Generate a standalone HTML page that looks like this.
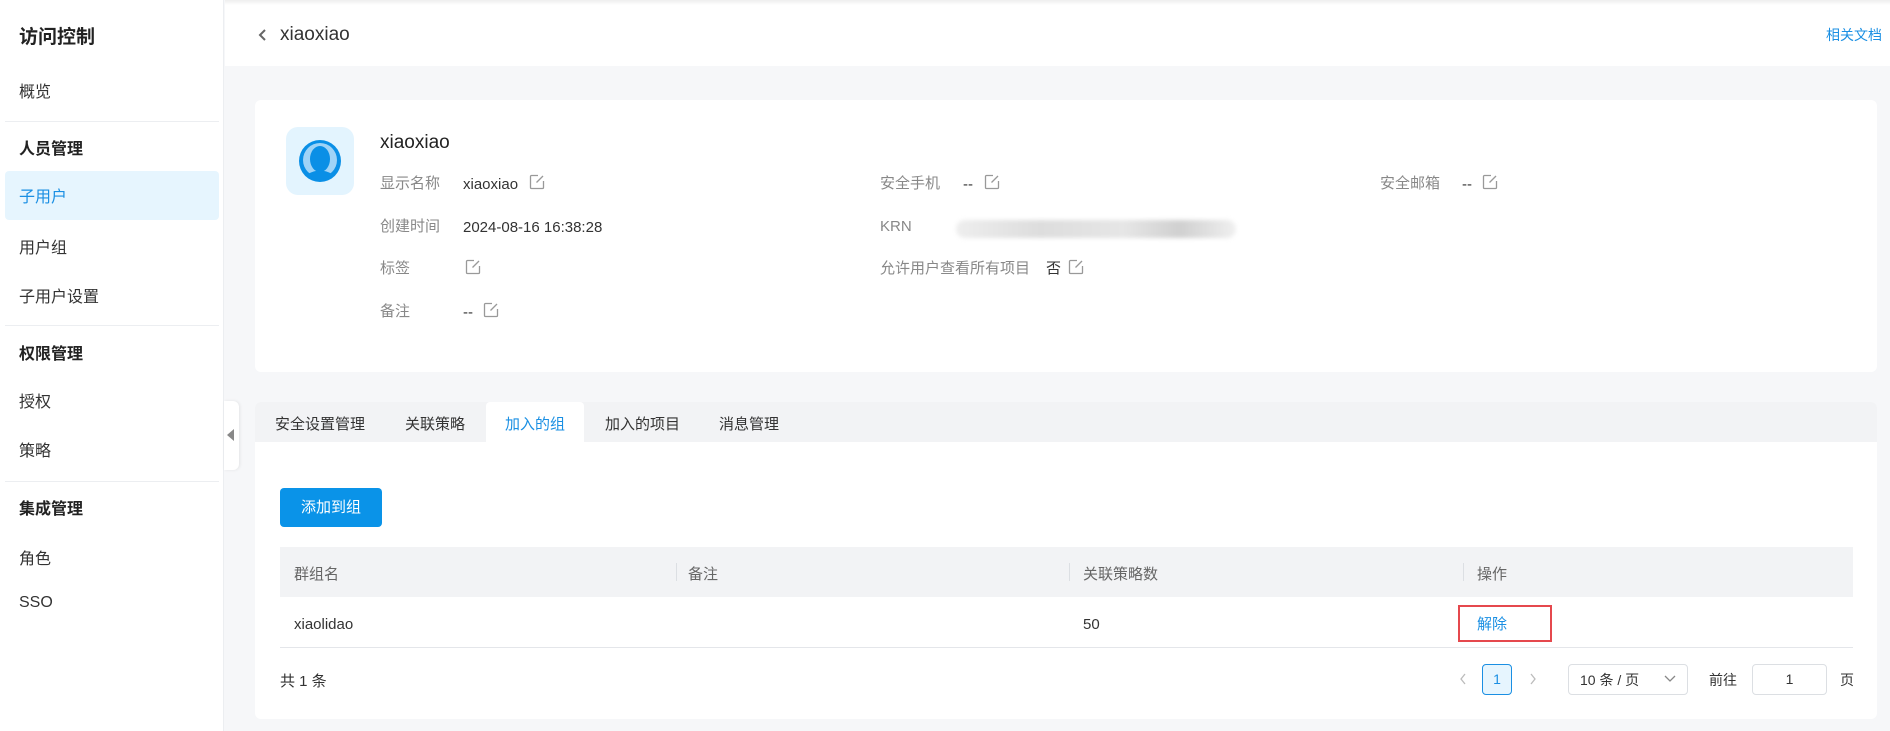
<!DOCTYPE html>
<html><head><meta charset="utf-8"><style>
*{box-sizing:border-box;margin:0;padding:0}
body{width:1890px;height:731px;overflow:hidden;background:#f6f7f9;font-family:"Liberation Sans","Noto Sans CJK SC",sans-serif;color:#333;position:relative}
.abs{position:absolute;white-space:nowrap}
.side{position:absolute;left:0;top:0;width:224px;height:731px;background:#fff;border-right:1px solid #eceef1}
.side .t{position:absolute;left:19px;font-size:16px;color:#333}
.side .h{font-weight:bold;color:#222}
.div{position:absolute;left:5px;width:214px;height:1px;background:#eceef1}
.hdr{position:absolute;left:225px;top:0;width:1665px;height:66px;background:#fff}
.card{position:absolute;background:#fff;border-radius:6px}
.lbl{position:absolute;font-size:15px;color:#888;white-space:nowrap}
.val{position:absolute;font-size:15px;color:#333;white-space:nowrap}
.ed{position:absolute;width:16px;height:16px}
.tab{position:absolute;top:413px;font-size:15px;color:#333}
.th{position:absolute;top:563px;font-size:15px;color:#666}
.sep{position:absolute;top:563px;width:1px;height:18px;background:#dcdfe3}
</style></head><body>
<div class="side">
<div class="t h" style="top:22px;font-size:19px">访问控制</div>
<div class="t" style="top:78px">概览</div>
<div class="div" style="top:121px"></div>
<div class="t h" style="top:135px">人员管理</div>
<div style="position:absolute;left:5px;top:171px;width:214px;height:49px;background:#e6f5fe;border-radius:4px"></div>
<div class="t" style="top:183px;color:#1a8fe3">子用户</div>
<div class="t" style="top:234px">用户组</div>
<div class="t" style="top:283px">子用户设置</div>
<div class="div" style="top:325px"></div>
<div class="t h" style="top:340px">权限管理</div>
<div class="t" style="top:388px">授权</div>
<div class="t" style="top:437px">策略</div>
<div class="div" style="top:481px"></div>
<div class="t h" style="top:495px">集成管理</div>
<div class="t" style="top:545px">角色</div>
<div class="t" style="top:594px">SSO</div>
</div>
<div style="position:absolute;left:224px;top:401px;width:15px;height:69px;background:#fff;border-radius:0 6px 6px 0;box-shadow:1px 0 3px rgba(0,0,0,.08)"></div>
<div style="position:absolute;left:227px;top:429px;width:0;height:0;border-top:6px solid transparent;border-bottom:6px solid transparent;border-right:7px solid #888"></div>
<div class="hdr"></div>
<div class="abs" style="left:225px;top:0;width:1665px;height:5px;background:linear-gradient(#eee,#fff)"></div>
<svg class="abs" style="left:257px;top:28px" width="12" height="14"><path d="M8 2 L3 7 L8 12" stroke="#666" stroke-width="2" fill="none"/></svg>
<div class="abs" style="left:280px;top:24px;font-size:19px;color:#333">xiaoxiao</div>
<div class="abs" style="left:1826px;top:25px;font-size:14px;color:#1a8fe3">相关文档</div>

<div class="card" style="left:255px;top:100px;width:1622px;height:272px"></div>
<div class="abs" style="left:286px;top:127px;width:68px;height:68px;background:#e3f4fe;border-radius:12px"></div>
<svg class="abs" style="left:296px;top:137px" width="48" height="48" viewBox="0 0 48 48"><ellipse cx="24" cy="24" rx="21" ry="21" fill="#0a8fe6"/><ellipse cx="24" cy="23" rx="17" ry="17" fill="#9fd3f7"/><path d="M12 37 Q24 30 36 37 Q30 42 24 42 Q18 42 12 37Z" fill="#0a8fe6"/><ellipse cx="24" cy="22" rx="10" ry="13" fill="#0a8fe6"/></svg>
<div class="abs" style="left:380px;top:132px;font-size:19px;color:#222">xiaoxiao</div>

<div class="lbl" style="left:380px;top:172px">显示名称</div><div class="val" style="left:463px;top:176px">xiaoxiao</div>
<div class="lbl" style="left:380px;top:215px">创建时间</div><div class="val" style="left:463px;top:219px">2024-08-16 16:38:28</div>
<div class="lbl" style="left:380px;top:257px">标签</div>
<div class="lbl" style="left:380px;top:300px">备注</div><div class="val" style="left:463px;top:304px">--</div>
<div class="lbl" style="left:880px;top:172px">安全手机</div><div class="val" style="left:963px;top:176px">--</div>
<div class="lbl" style="left:880px;top:218px">KRN</div>
<div class="abs" style="left:956px;top:220px;width:280px;height:18px;background:linear-gradient(90deg,#eee,#ddd 30%,#e6e6e6 60%,#d0d0d0 80%,#f0f0f0);border-radius:9px;filter:blur(2px)"></div>
<div class="lbl" style="left:880px;top:257px">允许用户查看所有项目</div><div class="val" style="left:1046px;top:257px">否</div>
<div class="lbl" style="left:1380px;top:172px">安全邮箱</div><div class="val" style="left:1462px;top:176px">--</div>
<svg width="0" height="0" style="position:absolute"><defs><symbol id="e" viewBox="0 0 16 16"><path d="M9 1.5H2.5a1 1 0 0 0-1 1v11a1 1 0 0 0 1 1h11a1 1 0 0 0 1-1V7" stroke="#999" stroke-width="1.3" fill="none"/><path d="M7.5 8.5 L14 2" stroke="#999" stroke-width="1.3"/></symbol></defs></svg>
<svg class="ed" style="left:529px;top:174px"><use href="#e"/></svg>
<svg class="ed" style="left:465px;top:259px"><use href="#e"/></svg>
<svg class="ed" style="left:483px;top:302px"><use href="#e"/></svg>
<svg class="ed" style="left:984px;top:174px"><use href="#e"/></svg>
<svg class="ed" style="left:1068px;top:259px"><use href="#e"/></svg>
<svg class="ed" style="left:1482px;top:174px"><use href="#e"/></svg>

<div class="card" style="left:255px;top:402px;width:1622px;height:317px"></div>
<div class="abs" style="left:255px;top:402px;width:1622px;height:40px;background:#f2f3f5;border-radius:6px 6px 0 0"></div>
<div class="abs" style="left:486px;top:402px;width:98px;height:40px;background:#fff;border-radius:4px 4px 0 0"></div>
<div class="tab" style="left:275px">安全设置管理</div>
<div class="tab" style="left:405px">关联策略</div>
<div class="tab" style="left:505px;color:#1a8fe3">加入的组</div>
<div class="tab" style="left:605px">加入的项目</div>
<div class="tab" style="left:719px">消息管理</div>

<div class="abs" style="left:280px;top:488px;width:102px;height:39px;background:#0a93e8;border-radius:4px;color:#fff;font-size:15px;line-height:39px;text-align:center">添加到组</div>
<div class="abs" style="left:280px;top:547px;width:1573px;height:50px;background:#f2f3f5"></div>
<div class="th" style="left:294px">群组名</div>
<div class="sep" style="left:676px"></div><div class="th" style="left:688px">备注</div>
<div class="sep" style="left:1069px"></div><div class="th" style="left:1083px">关联策略数</div>
<div class="sep" style="left:1463px"></div><div class="th" style="left:1477px">操作</div>
<div class="abs" style="left:280px;top:647px;width:1573px;height:1px;background:#e4e6ea"></div>
<div class="val" style="left:294px;top:616px">xiaolidao</div>
<div class="val" style="left:1083px;top:616px">50</div>
<div class="val" style="left:1477px;top:613px;color:#1a8fe3">解除</div>
<div class="abs" style="left:1458px;top:605px;width:94px;height:37px;border:2px solid #e5484d"></div>

<div class="val" style="left:280px;top:670px">共 1 条</div>
<svg class="abs" style="left:1458px;top:672px" width="10" height="14"><path d="M7 2 L3 7 L7 12" stroke="#bbb" stroke-width="1.3" fill="none"/></svg>
<div class="abs" style="left:1482px;top:664px;width:30px;height:31px;border:1px solid #1a8fe3;background:#e6f5fe;border-radius:4px;color:#1a8fe3;font-size:14px;line-height:29px;text-align:center">1</div>
<svg class="abs" style="left:1528px;top:672px" width="10" height="14"><path d="M3 2 L7 7 L3 12" stroke="#bbb" stroke-width="1.3" fill="none"/></svg>
<div class="abs" style="left:1568px;top:664px;width:120px;height:31px;border:1px solid #dcdfe3;border-radius:4px;background:#fff"></div>
<div class="val" style="left:1580px;top:670px;font-size:14px">10 条 / 页</div>
<svg class="abs" style="left:1664px;top:674px" width="12" height="10"><path d="M1 2 L6 7 L11 2" stroke="#888" stroke-width="1.3" fill="none"/></svg>
<div class="val" style="left:1709px;top:670px;font-size:14px">前往</div>
<div class="abs" style="left:1752px;top:664px;width:75px;height:31px;border:1px solid #dcdfe3;border-radius:4px;background:#fff;font-size:14px;line-height:29px;text-align:center">1</div>
<div class="val" style="left:1840px;top:670px;font-size:14px">页</div>
</body></html>
